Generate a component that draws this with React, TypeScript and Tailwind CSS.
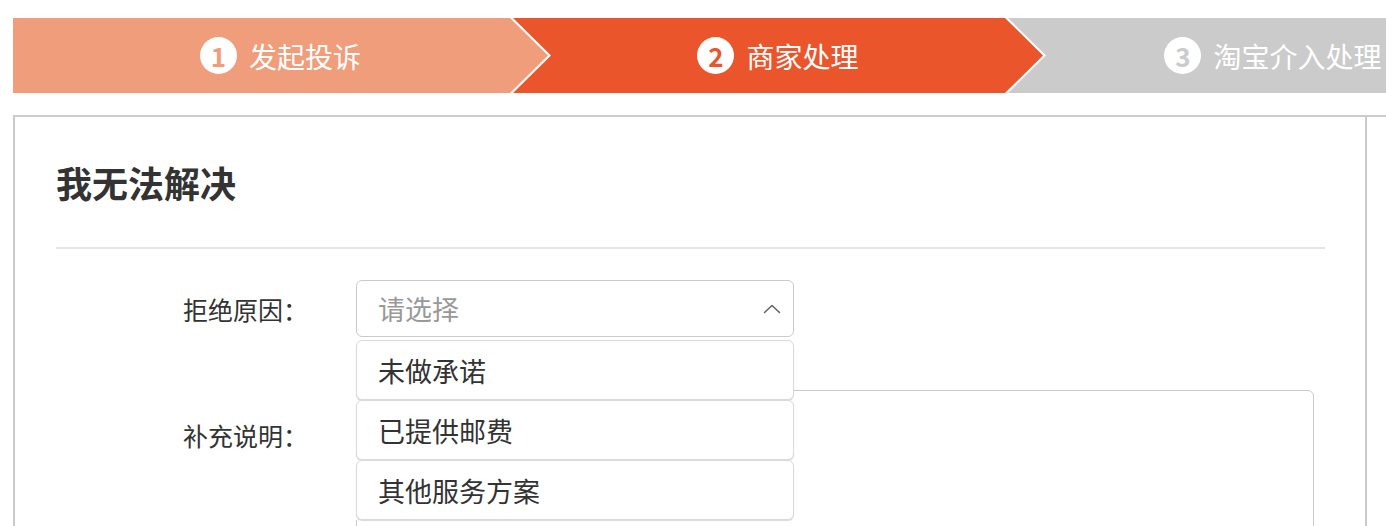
import { ReactNode } from "react"

type StepState = "done" | "active" | "todo"

interface Step {
  no: number
  label: string
  state: StepState
}

const steps: Step[] = [
  { no: 1, label: "发起投诉", state: "done" },
  { no: 2, label: "商家处理", state: "active" },
  { no: 3, label: "淘宝介入处理", state: "todo" },
]

const reasons = ["未做承诺", "已提供邮费", "其他服务方案"]

function StepItem({ step, index }: { step: Step; index: number }) {
  const bg =
    step.state === "done" ? "bg-[#f09d7b]" : step.state === "active" ? "bg-[#eb552b]" : "bg-[#cbcbcb]"
  const num =
    step.state === "done" ? "text-[#f09d7b]" : step.state === "active" ? "text-[#eb552b]" : "text-[#cbcbcb]"

  // first step has a flat left edge, the rest get a notch for the previous arrow
  const shape =
    index === 0
      ? "w-[535px] [clip-path:polygon(0_0,calc(100%_-_38px)_0,100%_50%,calc(100%_-_38px)_100%,0_100%)]"
      : index === 1
        ? "w-[530px] -ml-[35px] [clip-path:polygon(0_0,calc(100%_-_38px)_0,100%_50%,calc(100%_-_38px)_100%,0_100%,38px_50%)]"
        : "w-[530px] -ml-[35px] [clip-path:polygon(0_0,calc(100%_-_38px)_0,100%_50%,calc(100%_-_38px)_100%,0_100%,38px_50%)]"

  return (
    <div className={`${bg} ${shape} h-[75px] shrink-0 flex items-center justify-center gap-[12px]`}>
      <span
        className={`w-[37px] h-[37px] rounded-full bg-white ${num} flex items-center justify-center text-[26px] font-bold leading-none`}
      >
        {step.no}
      </span>
      <span className="text-white text-[28px] leading-none">{step.label}</span>
    </div>
  )
}

function FormRow({ label, children, top }: { label: string; children: ReactNode; top?: boolean }) {
  return (
    <div className={`flex ${top ? "items-start" : "items-center"}`}>
      <div className={`w-[300px] pl-[127px] text-[25px] text-[#333] leading-[36px] ${top ? "mt-[27px]" : ""}`}>
        {label}：
      </div>
      {children}
    </div>
  )
}

function ChevronUp() {
  return (
    <svg width="18" height="10" viewBox="0 0 18 10" fill="none">
      <polyline points="1.5,8.5 9,1.5 16.5,8.5" stroke="#666" strokeWidth="1.6" strokeLinecap="round" strokeLinejoin="round" />
    </svg>
  )
}

export default function App() {
  return (
    <div className="w-[1386px] h-[526px] overflow-hidden bg-white pt-[18px] pl-[13px] font-['Noto_Sans_CJK_SC','Noto_Sans',sans-serif]">
      <div className="flex">
        {steps.map((s, i) => (
          <StepItem key={s.no} step={s} index={i} />
        ))}
      </div>

      <div className="mt-[22px] flex w-[1500px] border-t-2 border-l-2 border-[#cbcbcb]">
        <div className="w-[1352px] shrink-0 border-r-2 border-[#cbcbcb] pl-[41px] pr-[40px] h-[420px]">
          <div className="h-[132px] flex items-center border-b-2 border-[#e6e6e6]">
            <h2 className="text-[36px] font-bold text-[#333] leading-none">我无法解决</h2>
          </div>

          <div className="pt-[31px]">
            <FormRow label="拒绝原因">
              <div className="relative w-[438px]">
                <div className="h-[57px] border-[1.5px] border-[#cbcbcb] rounded-[6px] flex items-center justify-between pl-[21px] pr-[12px]">
                  <span className="text-[27px] text-[#999] leading-none">请选择</span>
                  <ChevronUp />
                </div>
                <ul className="absolute left-0 top-[60px] w-full z-10 bg-white">
                  {reasons.map((r) => (
                    <li
                      key={r}
                      className="h-[60px] flex items-center pl-[21px] text-[27px] text-[#333] leading-none bg-white border border-[#dadada] rounded-[6px] shadow-[0_1px_1px_rgba(0,0,0,0.15)]"
                    >
                      {r}
                    </li>
                  ))}
                </ul>
              </div>
            </FormRow>

            <div className="mt-[53px]">
              <FormRow label="补充说明" top>
                <textarea className="w-[958px] h-[200px] border-[1.5px] border-[#cbcbcb] rounded-[6px] resize-none outline-none" />
              </FormRow>
            </div>
          </div>
        </div>
      </div>
    </div>
  )
}
